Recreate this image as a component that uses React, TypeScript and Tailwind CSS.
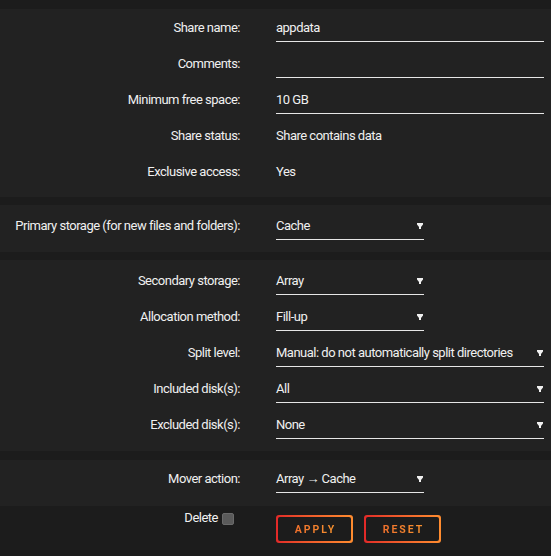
import { ReactNode } from 'react';

function Caret() {
  return (
    <svg width="6" height="6" viewBox="0 0 6 6" className="shrink-0">
      <path d="M0 0H6V1.5L4 4V6H2V4L0 1.5Z" fill="#f0f0f0" />
    </svg>
  );
}

function Row({ label, children }: { label: string; children?: ReactNode }) {
  return (
    <div className="flex h-9">
      <div className="w-[240px] shrink-0 whitespace-nowrap pt-[10px] text-right leading-[18px]">{label}</div>
      <div className="ml-9 flex-1 pr-[7px]">{children}</div>
    </div>
  );
}

function TextInput({ value }: { value?: string }) {
  return (
    <div className="mt-[10px] h-[23px] border-b border-[#e6e6e6] leading-[18px]">{value}</div>
  );
}

function Select({ value, wide }: { value: string; wide?: boolean }) {
  return (
    <div
      className={`mt-[10px] flex h-[23px] items-start justify-between border-b border-[#e6e6e6] pr-[1px] leading-[18px] ${
        wide ? 'w-full' : 'w-[148px]'
      }`}
    >
      <span className="whitespace-nowrap">{value}</span>
      <span className="pt-[6px]">
        <Caret />
      </span>
    </div>
  );
}

function Plain({ value }: { value: string }) {
  return <div className="pt-[10px] leading-[18px]">{value}</div>;
}

function ActionButton({ label }: { label: string }) {
  return (
    <div className="rounded-[3px] bg-gradient-to-r from-[#e22828] to-[#ff8c2f] p-[2px]">
      <div className="flex h-6 items-center justify-center rounded-[2px] bg-[#1c1c1c] pl-[2px] pt-[2px]">
        <span className="bg-gradient-to-r from-[#f0702c] to-[#f7922f] bg-clip-text text-[10.5px] font-bold leading-none tracking-[2px] text-transparent">
          {label}
        </span>
      </div>
    </div>
  );
}

export default function App() {
  return (
    <div
      className="min-h-screen w-full bg-[#1c1c1c] pt-[9px] text-[13px] tracking-[-0.5px] text-[#f0f0f0]"
      style={{ fontFamily: 'Roboto, "Liberation Sans", sans-serif' }}
    >
      {/* Share info */}
      <div className="bg-[#222222] pb-2">
        <Row label="Share name:">
          <TextInput value="appdata" />
        </Row>
        <Row label="Comments:">
          <TextInput />
        </Row>
        <Row label="Minimum free space:">
          <TextInput value="10 GB" />
        </Row>
        <Row label="Share status:">
          <Plain value="Share contains data" />
        </Row>
        <Row label="Exclusive access:">
          <Plain value="Yes" />
        </Row>
      </div>

      {/* Primary storage */}
      <div className="mt-2 bg-[#222222] pt-[2px] pb-[9px]">
        <Row label="Primary storage (for new files and folders):">
          <Select value="Cache" />
        </Row>
      </div>

      {/* Secondary storage */}
      <div className="mt-2 bg-[#222222] pt-[2px] pb-[9px]">
        <Row label="Secondary storage:">
          <Select value="Array" />
        </Row>
        <Row label="Allocation method:">
          <Select value="Fill-up" />
        </Row>
        <Row label="Split level:">
          <Select value="Manual: do not automatically split directories" wide />
        </Row>
        <Row label="Included disk(s):">
          <Select value="All" wide />
        </Row>
        <Row label="Excluded disk(s):">
          <Select value="None" wide />
        </Row>
      </div>

      {/* Mover */}
      <div className="mt-[9px] bg-[#222222] pb-[10px]">
        <Row label="Mover action:">
          <Select value="Array → Cache" />
        </Row>
      </div>

      {/* Actions */}
      <div className="flex">
        <div className="flex w-[240px] shrink-0 items-start justify-end pt-[3px] pr-[6px]">
          <span className="leading-[18px]">Delete</span>
          <span className="mt-[4px] ml-[4px] h-3 w-3 rounded-[2px] border border-[#6a6a6a] bg-[#5a5a5a]" />
        </div>
        <div className="ml-9 flex gap-[11px] pt-[9px] tracking-normal">
          <div className="w-[77px]">
            <ActionButton label="APPLY" />
          </div>
          <div className="w-[77px]">
            <ActionButton label="RESET" />
          </div>
        </div>
      </div>
    </div>
  );
}
